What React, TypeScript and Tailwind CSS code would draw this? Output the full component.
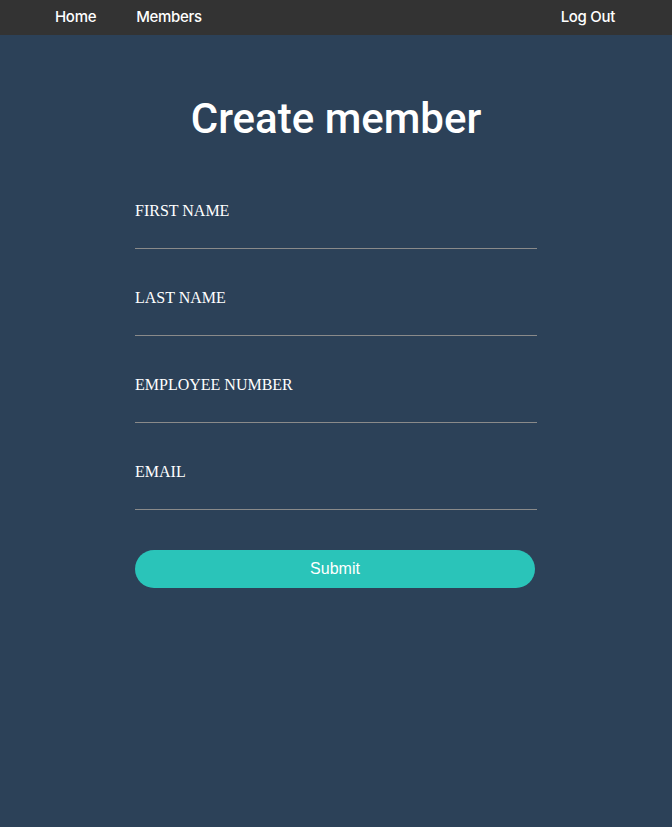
import React from 'react';

const fields = ['FIRST NAME', 'LAST NAME', 'EMPLOYEE NUMBER', 'EMAIL'];

export default function App() {
  return (
    <div className="min-h-screen bg-[#2c4158] text-white">
      {/* Top nav */}
      <nav className="h-[35px] bg-[#333333] flex items-center justify-between pl-[55px] pr-[57px] font-['Inter',sans-serif] text-[15px] font-medium tracking-[-0.3px]">
        <div className="flex items-center gap-[40px]">
          <a href="#">Home</a>
          <a href="#">Members</a>
        </div>
        <a href="#">Log Out</a>
      </nav>

      <h1 className="mt-[58px] text-center font-['Roboto',sans-serif] font-medium text-[42px] leading-[52px]">
        Create member
      </h1>

      <form className="w-[402px] mx-auto mt-[56px]" onSubmit={(e) => e.preventDefault()}>
        {fields.map((label) => (
          <div key={label} className="mb-[39px]">
            <label className="block font-['Liberation_Serif',serif] text-[16px] leading-[20px]">
              {label}
            </label>
            <input
              type="text"
              className="block w-full h-[28px] bg-transparent border-0 border-b border-[#8a8a8a] outline-none text-white"
            />
          </div>
        ))}
        <button
          type="submit"
          className="block w-[400px] h-[38px] mt-[40px] rounded-full bg-[#2ac4b9] text-white font-['Liberation_Sans',sans-serif] text-[16px]"
        >
          Submit
        </button>
      </form>
    </div>
  );
}
